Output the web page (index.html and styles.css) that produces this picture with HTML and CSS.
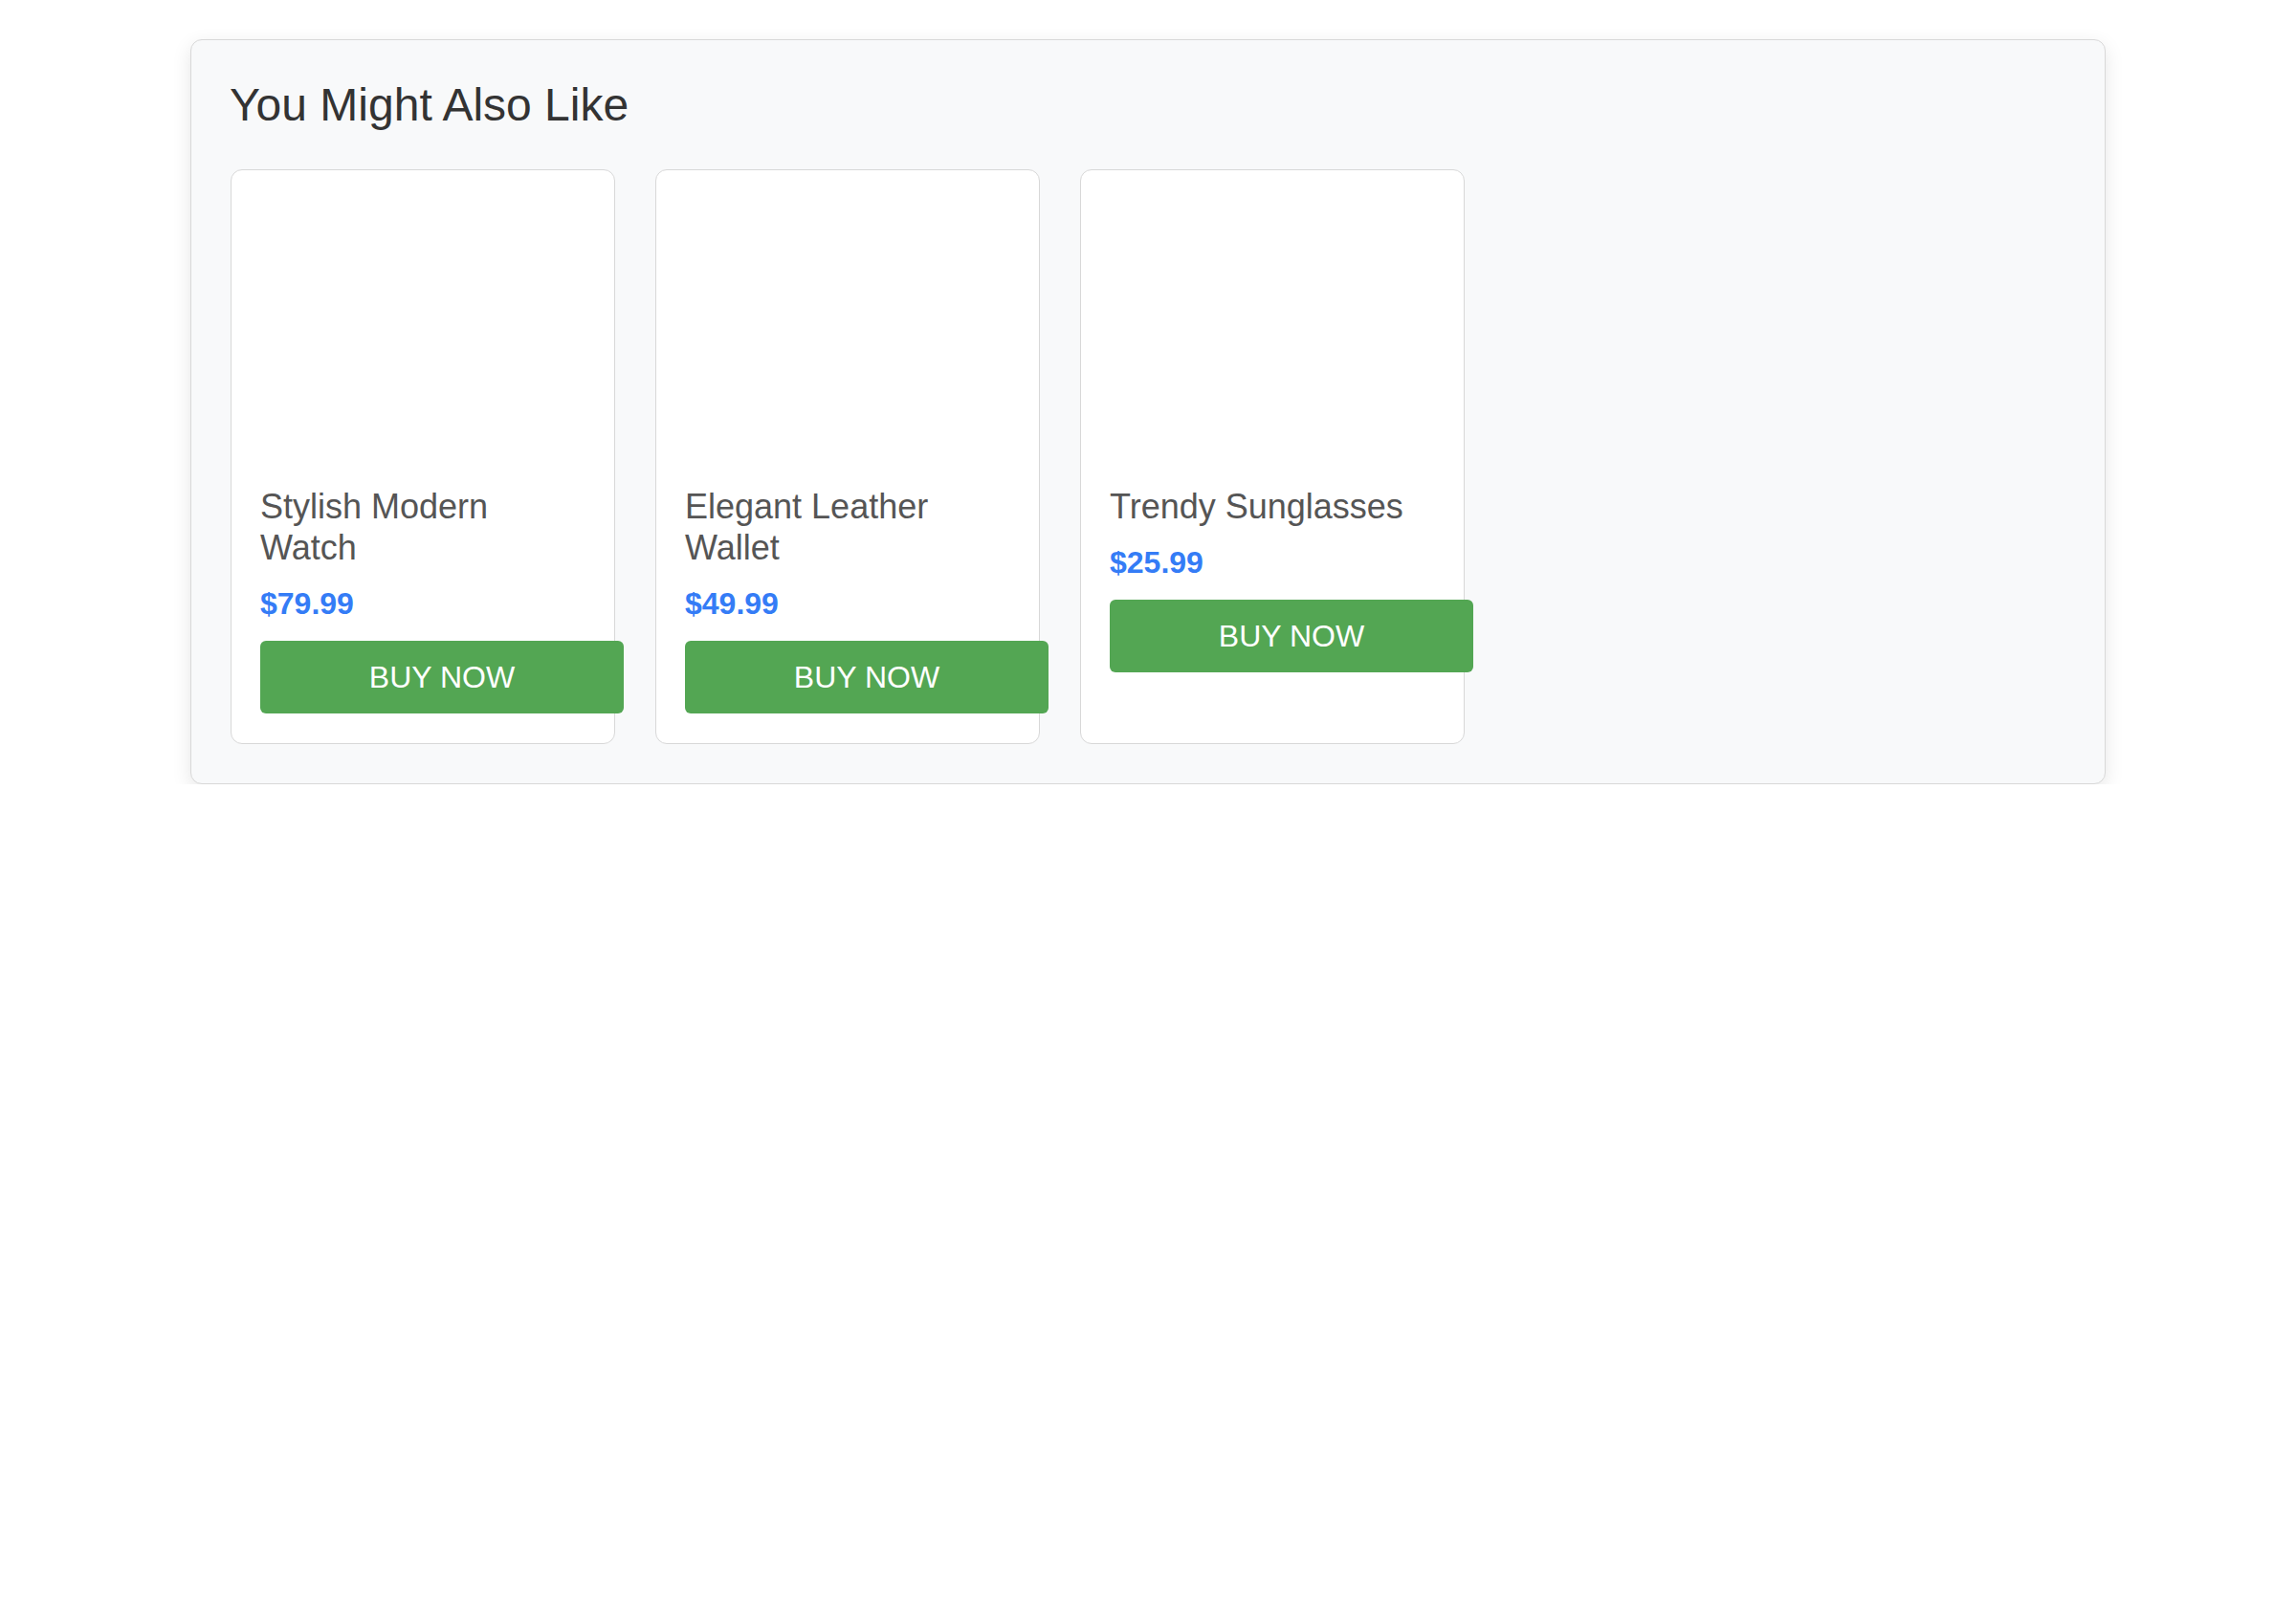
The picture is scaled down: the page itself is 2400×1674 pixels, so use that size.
FILE: index.html
```html
<!DOCTYPE html>
<html lang="en">
<head>
<meta charset="utf-8">
<title>You Might Also Like</title>
<link rel="stylesheet" href="styles.css">
</head>
<body>
<section class="recs">
  <h2 class="recs-title">You Might Also Like</h2>
  <div class="recs-list">
    <div class="product">
      <div class="product-thumb"></div>
      <h3 class="product-name">Stylish Modern Watch</h3>
      <p class="product-price">$79.99</p>
      <button class="buy-btn">Buy Now</button>
    </div>
    <div class="product">
      <div class="product-thumb"></div>
      <h3 class="product-name">Elegant Leather Wallet</h3>
      <p class="product-price">$49.99</p>
      <button class="buy-btn">Buy Now</button>
    </div>
    <div class="product">
      <div class="product-thumb"></div>
      <h3 class="product-name">Trendy Sunglasses</h3>
      <p class="product-price">$25.99</p>
      <button class="buy-btn">Buy Now</button>
    </div>
  </div>
</section>
</body>
</html>
```

FILE: styles.css
```css
html, body {
  margin: 0;
  padding: 0;
  background: #ffffff;
  font-family: "Liberation Sans", Arial, Helvetica, sans-serif;
}

.recs {
  box-sizing: border-box;
  width: 2002px;
  margin: 41px auto 0;
  padding: 40px 40px 41px 41px;
  background: #f8f9fa;
  border: 1px solid #d8d8d8;
  border-radius: 12px;
  box-shadow: 0 6px 20px rgba(0, 0, 0, 0.1);
}

.recs-title {
  margin: 0 0 40px -1px;
  font-size: 48px;
  line-height: 55px;
  font-weight: normal;
  color: #333333;
}

.recs-list {
  display: flex;
  gap: 42px;
  align-items: stretch;
}

.product {
  box-sizing: border-box;
  width: 402px;
  padding: 30px 30px 31px;
  background: #ffffff;
  border: 1px solid #d8d8d8;
  border-radius: 12px;
  display: flex;
  flex-direction: column;
  align-items: flex-start;
}

.product-thumb {
  height: 300px;
  width: 100%;
}

.product-name {
  margin: 0 0 18px;
  font-size: 36px;
  line-height: 43px;
  font-weight: normal;
  color: #555555;
}

.product-price {
  margin: 0 0 20px;
  font-size: 32px;
  line-height: 38px;
  font-weight: bold;
  color: #347cf6;
}

.buy-btn {
  box-sizing: content-box;
  width: 100%;
  padding: 20px;
  margin: 0;
  border: none;
  border-radius: 6px;
  background: #53a653;
  color: #ffffff;
  font-family: "Liberation Sans", Arial, Helvetica, sans-serif;
  font-size: 32px;
  line-height: 36px;
  text-transform: uppercase;
  text-align: center;
  cursor: pointer;
}
```
